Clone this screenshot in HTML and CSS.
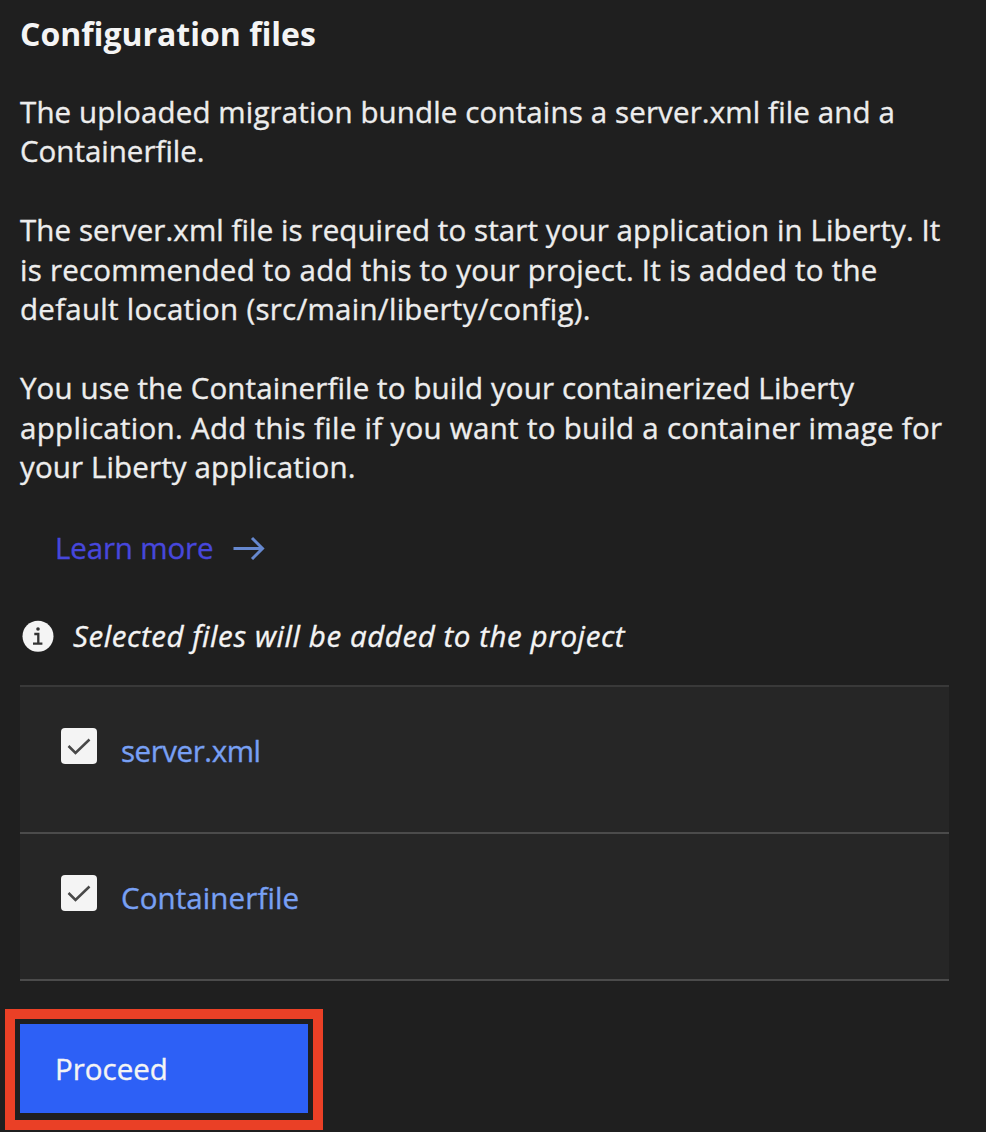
FILE: index.html
```html
<!DOCTYPE html>
<html lang="en">
<head>
<meta charset="utf-8">
<title>Configuration files</title>
<link rel="stylesheet" href="styles.css">
</head>
<body>
<main class="panel">
  <h1 class="title">Configuration files</h1>
  <p class="copy"><span class="line a1">The uploaded migration bundle contains a server.xml file and a</span><span class="line a2">Containerfile.</span></p>
  <p class="copy"><span class="line b1">The server.xml file is required to start your application in Liberty. It</span><span class="line b2">is recommended to add this to your project. It is added to the</span><span class="line b3">default location (src/main/liberty/config).</span></p>
  <p class="copy"><span class="line c1">You use the Containerfile to build your containerized Liberty</span><span class="line c2">application. Add this file if you want to build a container image for</span><span class="line c3">your Liberty application.</span></p>
  <a class="learn"><span class="learn-text">Learn more</span>
    <svg class="arrow" width="32" height="24" viewBox="0 0 32 24"><path d="M0.5 12.5H30M19 2L29.5 12.5L19 23"/></svg>
  </a>
  <div class="note">
    <svg width="32" height="32" viewBox="0 0 32 32"><circle cx="16" cy="16.3" r="15.5" fill="#f4f4f4"/><path d="M12.3 14h4v9.1M11 23.7h9.4" fill="none" stroke="#333" stroke-width="2.3"/><circle cx="16" cy="9" r="1.8" fill="#333"/></svg>
    <em class="note-text">Selected files will be added to the project</em>
  </div>
  <ul class="files">
    <li class="file"><span class="box"><svg width="24" height="18" viewBox="0 0 24 18"><path d="M1.5 9L8.5 16L22.5 2.5"/></svg></span><a class="name f1">server.xml</a></li>
    <li class="file"><span class="box"><svg width="24" height="18" viewBox="0 0 24 18"><path d="M1.5 9L8.5 16L22.5 2.5"/></svg></span><a class="name f2">Containerfile</a></li>
  </ul>
  <div class="highlight"><button class="proceed">Proceed</button></div>
</main>
</body>
</html>
```
FILE: styles.css
```css
* { box-sizing: border-box; }
body { margin: 0; background: #1f1f1f; color: #ededed; font: 29.5px/39.5px "Open Sans", "Noto Sans", sans-serif; -webkit-text-stroke: .35px currentColor; }
svg { -webkit-text-stroke: 0; }
.panel { height: 1132px; padding: 14px 0 0 20px; display: flex; flex-direction: column; align-items: flex-start; overflow: hidden; }
.title { margin: 0 0 38px; font-size: 32px; line-height: 39.5px; font-weight: 700; color: #f4f4f4; -webkit-text-stroke: 0; }
.copy { margin: 0 0 39.5px; }
.line { display: block; white-space: nowrap; width: max-content; }
.a1 { letter-spacing: .135px; }
.b1 { letter-spacing: .09px; }
.b2 { letter-spacing: .24px; }
.b3 { letter-spacing: .27px; }
.c1 { letter-spacing: .13px; }
.c2 { letter-spacing: .3px; }
.c3 { letter-spacing: .13px; }
.learn { margin: 1.5px 0 0 35px; display: flex; align-items: center; gap: 20px; height: 40px; color: #4747dc; }
.learn-text { letter-spacing: -.15px; }
.arrow { fill: none; stroke: #6688cf; stroke-width: 3; }
.note { display: flex; align-items: center; gap: 19.5px; height: 40px; margin: 48px 0 0 1.5px; color: #f4f4f4; }
.note-text { letter-spacing: .57px; }
.files { list-style: none; margin: 29.5px 0 0; padding: 0; width: 929px; background: #262626; border-top: 2px solid #393939; }
.file { display: flex; height: 147px; padding: 41px 0 0 41px; gap: 24px; border-bottom: 2px solid #4b4b4b; }
.box { width: 36px; height: 36px; border-radius: 4px; background: #f4f4f4; display: flex; align-items: center; justify-content: center; }
.box path { fill: none; stroke: #484848; stroke-width: 2.5; }
.name { color: #78a0f4; margin-top: 3px; }
.f1 { letter-spacing: -.45px; }
.f2 { letter-spacing: .1px; }
.highlight { margin: 28px 0 0 -15px; width: 318px; height: 121px; border: 10px solid #ea4026; padding: 5px; }
.proceed { display: flex; align-items: center; width: 288px; height: 89px; border: 0; padding: 0 35px; background: #2d60f6; color: #f4f4f4; font: inherit; }
```
